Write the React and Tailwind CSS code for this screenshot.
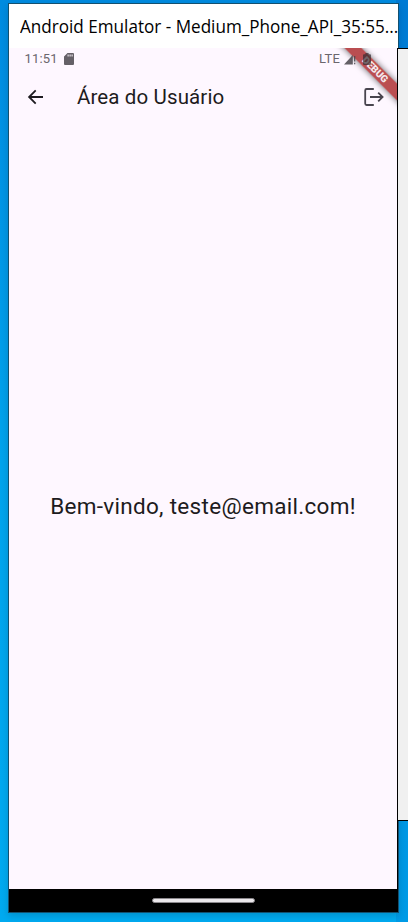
function StatusBar() {
  return (
    <div className="relative z-10 flex h-[22px] items-center justify-between pl-[15.500px] pr-[26px] text-[13px] text-[#6b666d]">
      <div className="flex items-center gap-[6px]">
        <span className="tracking-[0.15px]">11:51</span>
        <svg width="10" height="12" viewBox="0 0 10 12" fill="#656067">
          <path d="M3.5 0H9q1 0 1 1v10q0 1-1 1H1q-1 0-1-1V3.6zM3.6 1.4v2h1v-2zm2 0v2h1v-2zm2 0v2h1v-2z" fillRule="evenodd" />
        </svg>
      </div>
      <div className="flex items-center">
        <span className="tracking-[0.2px]">LTE</span>
        <svg className="ml-[4px]" width="12" height="12" viewBox="0 0 12 12" fill="#49454b" fillOpacity=".85">
          <path d="M0 11.5L8.8 2v9.5zM10 3h1.3v5.5H10zM10 9.8h1.3v1.5H10z" />
        </svg>
        <svg className="ml-[7px]" width="8" height="12" viewBox="0 0 8 12" fill="#302a2e" fillOpacity=".68">
          <path d="M2.4 0h3.2v1.2H7q1 0 1 1V11q0 1-1 1H1q-1 0-1-1V2.2q0-1 1-1h1.4z" />
        </svg>
      </div>
    </div>
  );
}

function DebugBanner() {
  return (
    <div className="absolute right-0 top-0 h-[70px] w-[70px] overflow-hidden">
      <div className="absolute left-[-2px] top-[16px] flex h-[12px] w-[100px] rotate-45 items-center justify-center bg-[#a92326]/80 text-[10px] leading-none font-black text-[#f5e9ec] shadow-[0_0_6px_rgba(0,0,0,0.6)]">
        DEBUG
      </div>
    </div>
  );
}

function AppBar() {
  return (
    <div className="flex h-[54px] items-center pl-[18px] pr-[13px]">
      <svg width="18" height="18" viewBox="0 0 18 18" fill="none" stroke="#1d1b20" strokeWidth="1.8">
        <path d="M16 9H2.5M8.7 2.4L2.1 9l6.6 6.6" />
      </svg>
      <h1 className="ml-[32px] text-[20.500px] tracking-[0.12px] whitespace-nowrap">Área do Usuário</h1>
      <svg className="ml-auto" width="20" height="18" viewBox="0 0 20 18" fill="none" stroke="#49454f" strokeWidth="1.8">
        <path d="M9.8 1H2.6Q1.2 1 1.2 2.4v13.2Q1.2 17 2.6 17h7.2M6 9h12M14.2 4.6L18.6 9l-4.400 4.400" />
      </svg>
    </div>
  );
}

export default function App() {
  return (
    <div className="relative h-[922px] w-[408px] overflow-hidden bg-linear-to-b from-[#008be0] via-[#00a3ec] to-[#00aaf0] pl-2 pt-[3px] font-[Roboto,sans-serif]">
      <div className="absolute right-0 top-0 h-full w-[12px] bg-linear-to-b from-[#007bd4] to-[#009be6]" />
      <div className="relative flex h-[910px] w-[391px] flex-col border border-[#13506f] bg-white shadow-[0_3px_7px_rgba(0,0,0,0.15)]">
        <div className="flex h-[44px] shrink-0 items-center pl-[11px] font-['Open_Sans','Noto_Sans',sans-serif] text-[18px] text-black">
          <span className="origin-left scale-x-[0.95] whitespace-nowrap">Android Emulator - Medium_Phone_API_35:55...</span>
        </div>
        <div className="flex h-[841px] w-[388px] shrink-0 flex-col bg-[#fef7ff] text-[#1d1b20]">
          <div className="relative">
            <DebugBanner />
            <StatusBar />
            <AppBar />
          </div>
          <div className="flex h-[765px] items-center justify-center pt-px">
            <p className="text-[22.500px] tracking-[0.3px] whitespace-nowrap">Bem-vindo, teste@email.com!</p>
          </div>
        </div>
        <div className="flex h-[23px] shrink-0 items-center justify-center bg-black">
          <div className="h-[5px] w-[103px] rounded-full border border-[#8b888c] bg-[#ebe8eb]" />
        </div>
      </div>
      <div className="absolute left-[397px] top-[48px] h-[773px] w-[20px] border border-black bg-[#f0f0f0]" />
      <div className="absolute left-[397px] top-[821px] h-[68px] w-px bg-black" />
    </div>
  );
}
